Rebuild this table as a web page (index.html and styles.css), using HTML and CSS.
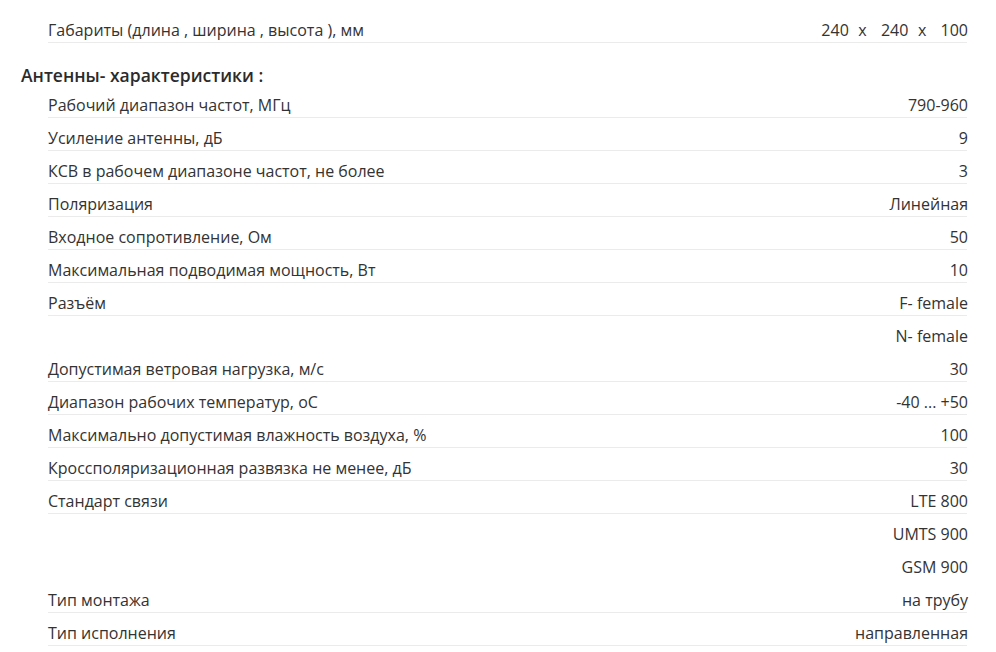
FILE: index.html
```html
<!DOCTYPE html>
<html lang="ru">
<head>
<meta charset="utf-8">
<link rel="stylesheet" href="styles.css">
</head>
<body>
<div class="specs">
  <div class="row"><span class="name">Габариты (длина , ширина , высота ), мм</span><span class="val dims">240  x   240  x   100</span></div>
  <h3 class="group">Антенны- характеристики :</h3>
  <div class="row"><span class="name">Рабочий диапазон частот, МГц</span><span class="val">790-960</span></div>
  <div class="row"><span class="name">Усиление антенны, дБ</span><span class="val">9</span></div>
  <div class="row"><span class="name">КСВ в рабочем диапазоне частот, не более</span><span class="val">3</span></div>
  <div class="row"><span class="name">Поляризация</span><span class="val">Линейная</span></div>
  <div class="row"><span class="name">Входное сопротивление, Ом</span><span class="val">50</span></div>
  <div class="row"><span class="name">Максимальная подводимая мощность, Вт</span><span class="val">10</span></div>
  <div class="row"><span class="name">Разъём</span><span class="val">F- female</span></div>
  <div class="row cont"><span class="name"></span><span class="val">N- female</span></div>
  <div class="row"><span class="name">Допустимая ветровая нагрузка, м/с</span><span class="val">30</span></div>
  <div class="row"><span class="name">Диапазон рабочих температур, оС</span><span class="val">-40 ... +50</span></div>
  <div class="row"><span class="name">Максимально допустимая влажность воздуха, %</span><span class="val">100</span></div>
  <div class="row"><span class="name">Кроссполяризационная развязка не менее, дБ</span><span class="val">30</span></div>
  <div class="row"><span class="name">Стандарт связи</span><span class="val">LTE 800</span></div>
  <div class="row cont"><span class="name"></span><span class="val">UMTS 900</span></div>
  <div class="row cont"><span class="name"></span><span class="val">GSM 900</span></div>
  <div class="row"><span class="name">Тип монтажа</span><span class="val">на трубу</span></div>
  <div class="row"><span class="name">Тип исполнения</span><span class="val">направленная</span></div>
</div>
</body>
</html>
```
FILE: styles.css
```css
html, body {
  margin: 0;
  padding: 0;
  background: #fff;
}
body {
  font-family: "Open Sans", "DejaVu Sans", sans-serif;
  color: #333;
  font-size: 16px;
}
.specs {
  padding: 10px 29px 0 21px;
}
.row {
  display: flex;
  justify-content: space-between;
  margin-left: 27px;
  padding: 9px 0 1px;
  line-height: 22px;
  height: 22px;
  border-bottom: 1px solid #ebebeb;
}
.row.cont {
  border-bottom-color: transparent;
}
.val {
  text-align: right;
  white-space: pre;
  margin-right: -1px;
}
.val.dims {
  word-spacing: 0.6px;
}
.group {
  margin: 0;
  padding: 23px 0 0;
  font-size: 17.5px;
  line-height: 19px;
  font-weight: 600;
  color: #2b2b2b;
}
```
